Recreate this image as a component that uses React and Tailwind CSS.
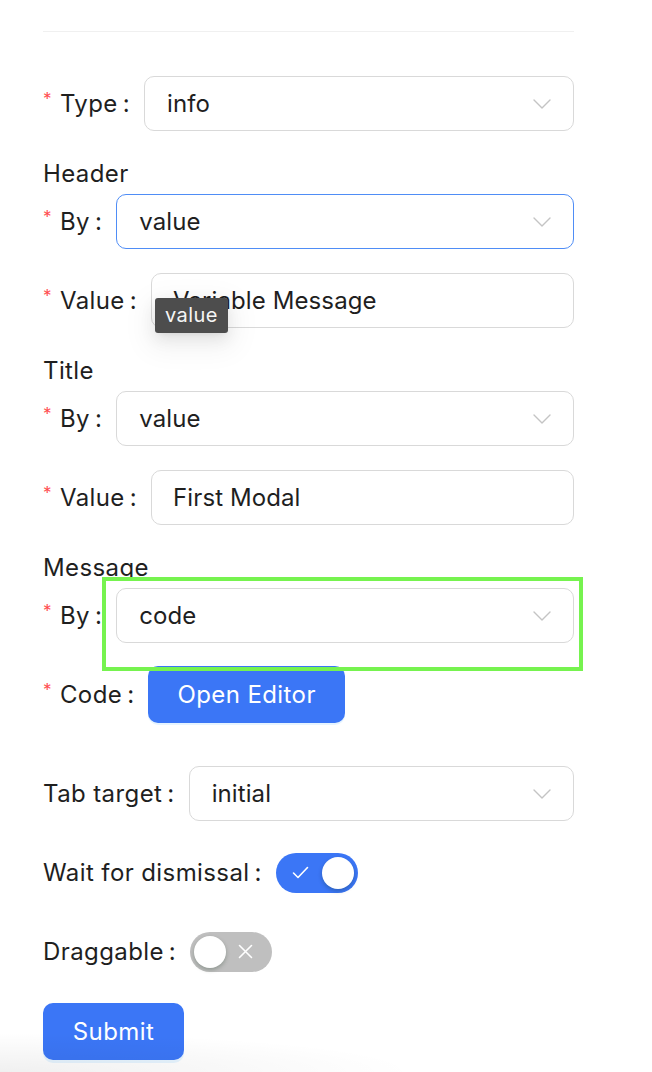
import React from 'react';

const Chevron = () => (
  <svg width="18" height="10" viewBox="0 0 18 10" fill="none" className="shrink-0">
    <path d="M1 1l8 8 8-8" stroke="#c4c4c4" strokeWidth="1.4" strokeLinecap="round" strokeLinejoin="round" />
  </svg>
);

const Label = ({ required, children }) => (
  <div className="flex shrink-0 items-center whitespace-nowrap">
    {required && <span className="mr-[8px] -mt-[8px] text-[17px] leading-none text-[#ff4d4f]">*</span>}
    <span>{children}</span>
    <span className="ml-[5px] mr-[14px]">:</span>
  </div>
);

const Select = ({ value, focused }) => (
  <div
    className={`flex h-[55px] flex-1 items-center justify-between rounded-[10px] bg-white pl-[22px] pr-[22px] tracking-[0.1px] ${
      focused ? 'border-[1.5px] border-[#4f8df6]' : 'border border-[#d9d9d9]'
    }`}
  >
    <span>{value}</span>
    <Chevron />
  </div>
);

const Input = ({ value }) => (
  <div className="flex h-[55px] flex-1 items-center rounded-[10px] border border-[#d9d9d9] bg-white px-[21px] tracking-[0.1px]">
    {value}
  </div>
);

const Row = ({ children, className = 'mb-[24px]' }) => (
  <div className={`flex h-[55px] items-center ${className}`}>{children}</div>
);

const Toggle = ({ on }) =>
  on ? (
    <div className="flex h-[40px] w-[82px] items-center justify-between rounded-full bg-[#3b76f6] pl-[16px] pr-[4px]">
      <svg width="17" height="13" viewBox="0 0 17 13" fill="none">
        <path d="M1.5 7l4.5 4.5L15.5 1.5" stroke="white" strokeWidth="1.6" strokeLinecap="round" strokeLinejoin="round" />
      </svg>
      <div className="h-[32px] w-[32px] rounded-full bg-white shadow-[0_2px_4px_rgba(0,35,11,0.25)]" />
    </div>
  ) : (
    <div className="flex h-[40px] w-[82px] items-center justify-between rounded-full bg-[#bfbfbf] pl-[4px] pr-[19px]">
      <div className="h-[32px] w-[32px] rounded-full bg-white shadow-[0_2px_4px_rgba(0,35,11,0.25)]" />
      <svg width="15" height="15" viewBox="0 0 15 15" fill="none">
        <path d="M1.5 1.5l12 12M13.5 1.5l-12 12" stroke="white" strokeWidth="1.6" strokeLinecap="round" />
      </svg>
    </div>
  );

const Section = ({ children }) => (
  <div className="mb-[4px] h-[35px] leading-[37px]">{children}</div>
);

export default function App() {
  return (
    <div className="relative min-h-[1072px] overflow-hidden bg-white font-['Inter',sans-serif] text-[24px] tracking-[0.4px] text-[#1f1f1f]">
      <div className="ml-[43px] w-[531px] pt-[31px]">
        <div className="mb-[44px] h-px bg-[#f0f0f0]" />

        <Row>
          <Label required>Type</Label>
          <Select value="info" />
        </Row>

        <Section>Header</Section>
        <Row>
          <Label required>By</Label>
          <Select value="value" focused />
        </Row>
        <Row>
          <Label required>Value</Label>
          <div className="relative flex flex-1">
            <Input value="Variable Message" />
            <div className="absolute left-[4px] top-[25px] rounded-[3px] bg-[#4d4d4d] px-[10px] py-[2px] text-[20px] leading-[31px] text-[#f5f5f5] shadow-[0_6px_16px_rgba(0,0,0,0.08),0_3px_6px_-4px_rgba(0,0,0,0.12),0_9px_28px_8px_rgba(0,0,0,0.05)]">
              value
            </div>
          </div>
        </Row>

        <Section>Title</Section>
        <Row>
          <Label required>By</Label>
          <Select value="value" />
        </Row>
        <Row>
          <Label required>Value</Label>
          <Input value="First Modal" />
        </Row>

        <Section>Message</Section>
        <div className="relative">
          <Row>
            <Label required>By</Label>
            <Select value="code" />
          </Row>
          <div className="pointer-events-none absolute left-[59px] top-[-11px] h-[94px] w-[481px] border-[4px] border-[#76f34f]" />
        </div>
        <Row className="mb-[44px]">
          <Label required>Code</Label>
          <button className="h-[57px] rounded-[10px] bg-[#3b76f6] px-[29px] text-white shadow-[0_2px_0_rgba(5,145,255,0.1)]">
            Open Editor
          </button>
        </Row>

        <Row>
          <Label>Tab target</Label>
          <Select value="initial" />
        </Row>
        <Row>
          <Label>Wait for dismissal</Label>
          <Toggle on />
        </Row>
        <Row>
          <Label>Draggable</Label>
          <Toggle />
        </Row>

        <button className="h-[57px] w-[141px] rounded-[10px] bg-[#3b76f6] text-white shadow-[0_3px_0_rgba(5,145,255,0.1)]">
          Submit
        </button>
      </div>
      <div className="pointer-events-none absolute bottom-0 left-0 h-[40px] w-[420px] bg-[radial-gradient(ellipse_at_bottom_left,rgba(0,0,0,0.06),transparent_70%)]" />
    </div>
  );
}
